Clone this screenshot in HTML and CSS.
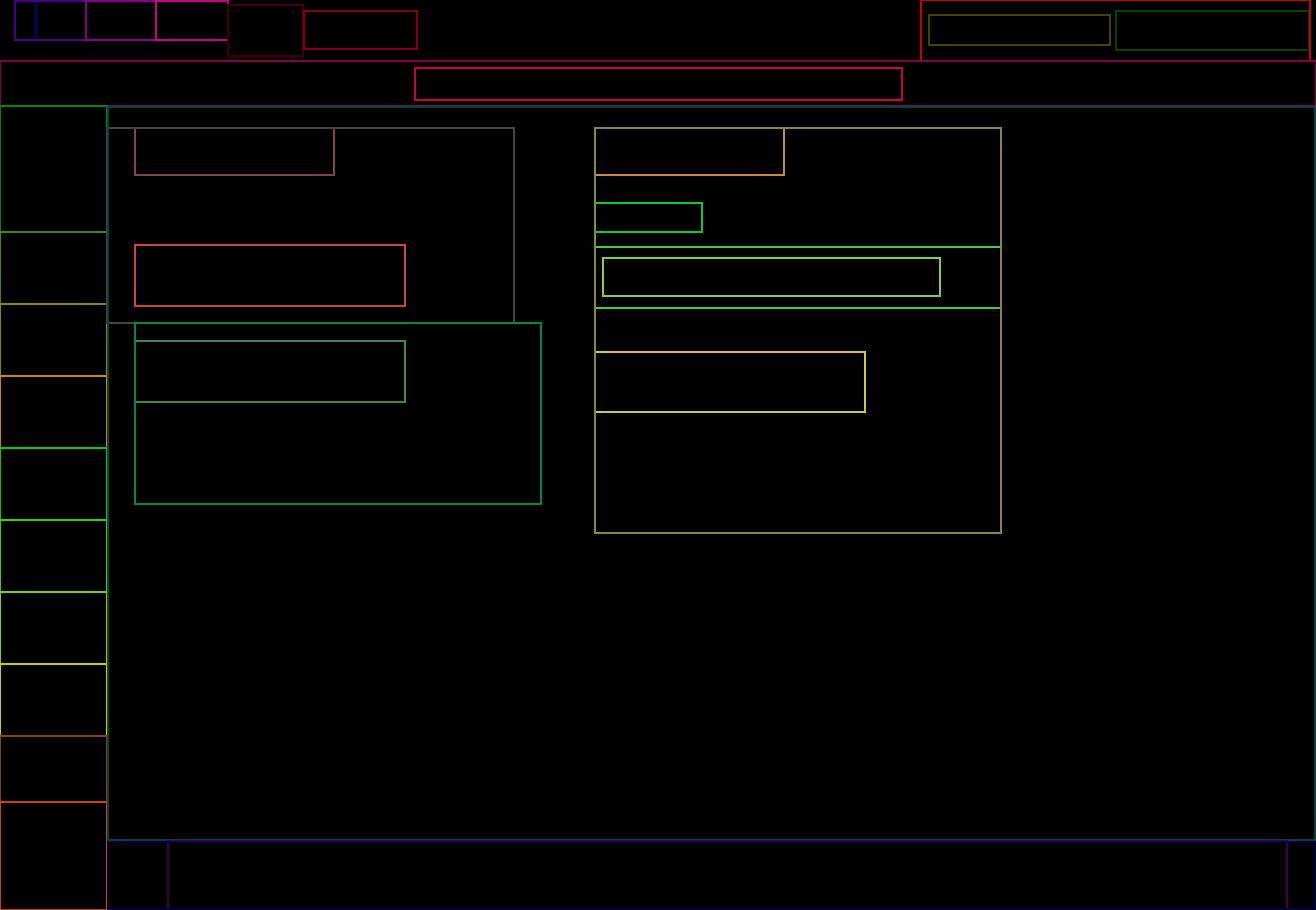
FILE: index.html
```html
<!DOCTYPE html>
<html>
<head>
<meta charset="utf-8">
<link rel="stylesheet" href="styles.css">
</head>
<body>
<div class="page">
  <header class="topbar">
    <div class="brand">
      <div class="brand-logo">
        <div class="brand-icon"></div>
      </div>
      <div class="brand-name"></div>
      <div class="brand-tag"></div>
    </div>
    <div class="menu-btn"></div>
    <div class="workspace"></div>
    <div class="topbar-right">
      <div class="status"></div>
      <div class="account"></div>
    </div>
  </header>
  <nav class="navbar">
    <div class="search"></div>
  </nav>
  <div class="body">
    <aside class="sidebar">
      <div class="side-head"></div>
      <div class="side-item c1"></div>
      <div class="side-item c2"></div>
      <div class="side-item c3"></div>
      <div class="side-item c4"></div>
      <div class="side-item c5"></div>
      <div class="side-item c6"></div>
      <div class="side-item c7"></div>
      <div class="side-spacer"></div>
      <div class="side-foot"></div>
    </aside>
    <div class="content-col">
      <main class="main">
        <div class="col-left">
          <section class="panel-a">
            <div class="panel-a-title"></div>
            <div class="panel-a-body"></div>
          </section>
          <section class="panel-b">
            <div class="panel-b-body"></div>
          </section>
        </div>
        <section class="col-right">
          <div class="card-title"></div>
          <div class="card-chip"></div>
          <div class="card-row">
            <div class="card-row-inner"></div>
          </div>
          <div class="card-block"></div>
        </section>
      </main>
      <footer class="footer">
        <div class="footer-inner"></div>
      </footer>
    </div>
  </div>
</div>
</body>
</html>
```

FILE: styles.css
```css
* { box-sizing: border-box; }
html, body { margin: 0; padding: 0; background: #000; }
body { font-family: "Liberation Sans", Arial, sans-serif; overflow: hidden; }

.page {
  width: 1316px;
  height: 910px;
  display: grid;
  grid-template-rows: 61px 45px 804px;
}

.page div, .page header, .page nav, .page aside, .page section {
  outline-offset: -1px;
}

/* top bar */
.topbar { display: flex; align-items: flex-start; }
.brand {
  display: flex;
  margin: 1px 0 0 15px;
  width: 213px;
  height: 39px;
}
.brand-logo {
  width: 71px;
  height: 39px;
  padding: 2px 0 2px 20px;
  outline: 2px solid #440088;
}
.brand-icon { width: 51px; height: 35px; border-left: 2px solid #000088; }
.brand-name { width: 70px; height: 39px; outline: 2px solid #880088; }
.brand-tag { width: 72px; height: 39px; outline: 2px solid #cc0088; }
.menu-btn { margin-top: 5px; width: 75px; height: 51px; outline: 2px solid #440000; }
.workspace { margin: 11px 0 0 1px; width: 113px; height: 38px; outline: 2px solid #880000; }
.topbar-right {
  margin-left: auto;
  margin-right: 6px;
  width: 389px;
  height: 61px;
  display: flex;
  align-items: flex-start;
  outline: 2px solid #cc0000;
}
.status { margin: 15px 0 0 8px; width: 181px; height: 30px; outline: 2px solid #444400; }
.account { margin: 11px 0 0 6px; width: 193px; height: 39px; outline: 2px solid #004400; }

/* nav */
.navbar { outline: 2px solid #880044; padding: 7px 0 0 415px; }
.search { width: 487px; height: 32px; outline: 2px solid #cc0044; }

/* body */
.body { display: grid; grid-template-columns: 107px 1209px; }
.sidebar { display: flex; flex-direction: column; }
.side-head { height: 126px; outline: 2px solid #008800; }
.side-item { height: 72px; }
.c1 { outline: 2px solid #448800; }
.c2 { outline: 2px solid #888800; }
.c3 { outline: 2px solid #cc8800; }
.c4 { outline: 2px solid #00cc00; }
.c5 { outline: 2px solid #44cc00; }
.c6 { outline: 2px solid #88cc00; }
.c7 { outline: 2px solid #cccc00; }
.side-spacer { height: 66px; outline: 2px solid #884400; }
.side-foot { height: 108px; outline: 2px solid #cc4400; }

.content-col { display: grid; grid-template-rows: 735px 69px; }
.main {
  outline: 2px solid #004444;
  outline-offset: -2px;
  display: flex;
  align-items: flex-start;
  gap: 81px;
  padding-top: 22px;
}
.col-left { width: 407px; flex: none; display: flex; flex-direction: column; align-items: flex-start; }
.panel-a {
  width: 407px;
  height: 195px;
  padding-left: 28px;
  outline: 2px solid #444444;
}
.panel-a-title { width: 199px; height: 47px; outline: 2px solid #884444; }
.panel-a-body { margin-top: 70px; width: 270px; height: 61px; outline: 2px solid #cc4444; }
.panel-b {
  flex: none;
  margin-left: 28px;
  width: 406px;
  height: 181px;
  padding-top: 18px;
  outline: 2px solid #008844;
}
.panel-b-body { width: 270px; height: 61px; outline: 2px solid #448844; }

.col-right {
  flex: none;
  width: 406px;
  height: 405px;
  outline: 2px solid #888844;
}
.card-title { width: 189px; height: 47px; outline: 2px solid #cc8844; }
.card-chip { margin-top: 28px; width: 107px; height: 29px; outline: 2px solid #00cc44; }
.card-row { margin-top: 15px; height: 61px; padding: 11px 0 0 8px; outline: 2px solid #44cc44; }
.card-row-inner { width: 337px; height: 38px; outline: 2px solid #88cc44; }
.card-block { margin-top: 44px; width: 270px; height: 60px; outline: 2px solid #cccc44; }

.footer { outline: 2px solid #000044; outline-offset: -2px; padding-left: 61px; }
.footer-inner { width: 1119px; height: 69px; outline: 2px solid #440044; }
```
